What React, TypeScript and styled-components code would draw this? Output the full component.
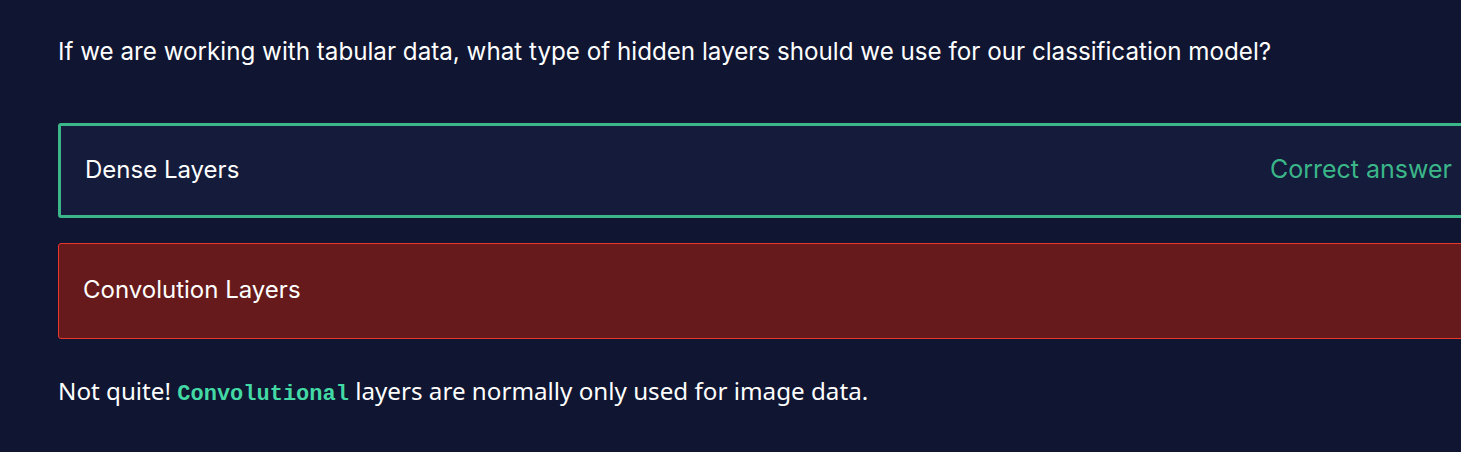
import styled, { createGlobalStyle } from "styled-components";

const GlobalStyle = createGlobalStyle`
  html, body {
    margin: 0;
    background: #101531;
    overflow: hidden;
  }
  body {
    font-family: "Inter", "Noto Sans", sans-serif;
    color: #ffffff;
  }
`;

const Page = styled.div`
  width: 1425px;
  padding: 34px 0 0 58px;
`;

const Question = styled.p`
  margin: 0 0 53px;
  font-size: 24.2px;
  line-height: 36px;
`;

const Options = styled.div`
  display: flex;
  flex-direction: column;
  gap: 25px;
`;

type Status = "correct" | "wrong";

const Option = styled.div<{ $status: Status }>`
  box-sizing: border-box;
  height: ${(p) => (p.$status === "correct" ? 95 : 96)}px;
  display: flex;
  align-items: center;
  justify-content: space-between;
  border-radius: 3px;
  padding: 0 28px 3px 24px;
  font-size: 24px;
  background: ${(p) => (p.$status === "correct" ? "#141b3b" : "#671a1b")};
  border: ${(p) => (p.$status === "correct" ? "3px solid #3ab689" : "1px solid #e8372c")};
`;

const Badge = styled.span`
  color: #3ab689;
  font-size: 25px;
`;

const Feedback = styled.p`
  margin: 36px 0 0;
  font-family: "Noto Sans", sans-serif;
  font-size: 24.2px;
  line-height: 32px;
`;

const Code = styled.code`
  font-family: "Liberation Mono", monospace;
  font-weight: bold;
  font-size: 22px;
  color: #43d9a5;
`;

export default function App() {
  return (
    <>
      <GlobalStyle />
      <Page>
        <Question>
          If we are working with tabular data, what type of hidden layers should we use for our classification model?
        </Question>
        <Options>
          <Option $status="correct">
            <span>Dense Layers</span>
            <Badge>Correct answer</Badge>
          </Option>
          <Option $status="wrong">
            <span>Convolution Layers</span>
          </Option>
        </Options>
        <Feedback>
          Not quite! <Code>Convolutional</Code> layers are normally only used for image data.
        </Feedback>
      </Page>
    </>
  );
}
